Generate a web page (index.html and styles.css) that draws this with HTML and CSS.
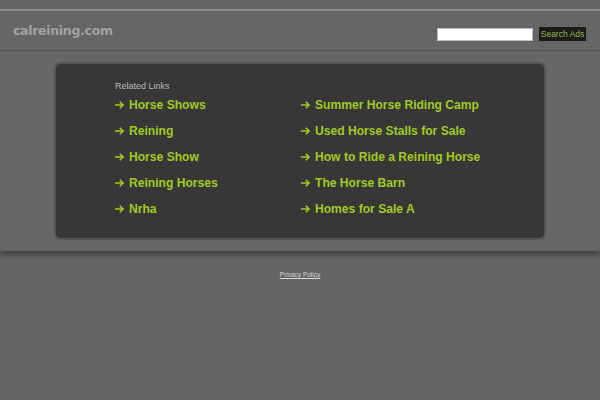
FILE: index.html
```html
<!DOCTYPE html>
<html>
<head>
<meta charset="utf-8">
<link rel="stylesheet" href="styles.css">
</head>
<body>
<div class="top"></div>
<header class="header">
  <div class="logo">calreining.com</div>
  <form class="search">
    <input class="search-input" type="text">
    <button class="search-btn" type="button">Search Ads</button>
  </form>
</header>
<main class="band">
  <section class="box">
    <div class="related">Related Links</div>
    <ul class="links">
      <li><a href="#"><svg class="arr" viewBox="0 0 9 8"><path d="M0 4H8M4.8 0.8L8 4L4.8 7.2"/></svg>Horse Shows</a></li>
      <li><a href="#"><svg class="arr" viewBox="0 0 9 8"><path d="M0 4H8M4.8 0.8L8 4L4.8 7.2"/></svg>Summer Horse Riding Camp</a></li>
      <li><a href="#"><svg class="arr" viewBox="0 0 9 8"><path d="M0 4H8M4.8 0.8L8 4L4.8 7.2"/></svg>Reining</a></li>
      <li><a href="#"><svg class="arr" viewBox="0 0 9 8"><path d="M0 4H8M4.8 0.8L8 4L4.8 7.2"/></svg>Used Horse Stalls for Sale</a></li>
      <li><a href="#"><svg class="arr" viewBox="0 0 9 8"><path d="M0 4H8M4.8 0.8L8 4L4.8 7.2"/></svg>Horse Show</a></li>
      <li><a href="#"><svg class="arr" viewBox="0 0 9 8"><path d="M0 4H8M4.8 0.8L8 4L4.8 7.2"/></svg>How to Ride a Reining Horse</a></li>
      <li><a href="#"><svg class="arr" viewBox="0 0 9 8"><path d="M0 4H8M4.8 0.8L8 4L4.8 7.2"/></svg>Reining Horses</a></li>
      <li><a href="#"><svg class="arr" viewBox="0 0 9 8"><path d="M0 4H8M4.8 0.8L8 4L4.8 7.2"/></svg>The Horse Barn</a></li>
      <li><a href="#"><svg class="arr" viewBox="0 0 9 8"><path d="M0 4H8M4.8 0.8L8 4L4.8 7.2"/></svg>Nrha</a></li>
      <li><a href="#"><svg class="arr" viewBox="0 0 9 8"><path d="M0 4H8M4.8 0.8L8 4L4.8 7.2"/></svg>Homes for Sale A</a></li>
    </ul>
  </section>
</main>
<footer class="footer"><a href="#">Privacy Policy</a></footer>
</body>
</html>
```
FILE: styles.css
```css
html, body {
  margin: 0;
  padding: 0;
  background: #646464;
  font-family: "Liberation Sans", Arial, sans-serif;
}
.top {
  box-sizing: border-box;
  height: 11px;
  border-bottom: 2px solid #8a8a8a;
}
.header {
  height: 39px;
  background: #666666;
  border-bottom: 1px solid #525252;
  display: flex;
  align-items: center;
  justify-content: space-between;
  padding: 0 14px 0 13px;
}
.logo {
  font-family: "DejaVu Sans", sans-serif;
  font-weight: bold;
  font-size: 12.5px;
  color: #a2a2a2;
  letter-spacing: -0.3px;
  margin-top: -1px;
}
.search {
  display: flex;
  align-items: center;
  gap: 6px;
  margin: 7px 0 0 0;
}
.search-input {
  width: 96px;
  height: 13px;
  box-sizing: border-box;
  border: 1px solid #bdbdbd;
  background: #fff;
  padding: 0;
  margin: 0;
}
.search-btn {
  height: 14px;
  width: 47px;
  padding: 0;
  border: none;
  background: #1a1d15;
  color: #94b552;
  font-family: "Liberation Sans", Arial, sans-serif;
  font-size: 8.5px;
  line-height: 14px;
}
.band {
  background: #666666;
  padding: 11px 54px 11px 54px;
  box-shadow: 0 4px 6px rgba(0,0,0,0.35);
  position: relative;
}
.box {
  height: 178px;
  box-sizing: border-box;
  background: #373737;
  border: 2px solid #545454;
  border-radius: 7px;
  padding: 16px 0 0 59px;
}
.related {
  font-size: 9px;
  color: #b8b8b8;
  line-height: 12px;
}
.links {
  list-style: none;
  margin: 4px 0 0 0;
  padding: 0;
  display: grid;
  grid-template-columns: 186px 1fr;
  grid-auto-rows: 26px;
}
.links li {
  line-height: 16px;
}
.links a {
  color: #a0cb1e;
  font-weight: bold;
  font-size: 12.1px;
  text-decoration: none;
}
.arr {
  width: 9px;
  height: 8px;
  margin-right: 5px;
  vertical-align: 0px;
  fill: none;
  stroke: #a0cb1e;
  stroke-width: 1.6;
}
.footer {
  text-align: center;
  padding-top: 20px;
  font-size: 6.5px;
  line-height: 8px;
}
.footer a {
  color: #d8d8d8;
}
```
